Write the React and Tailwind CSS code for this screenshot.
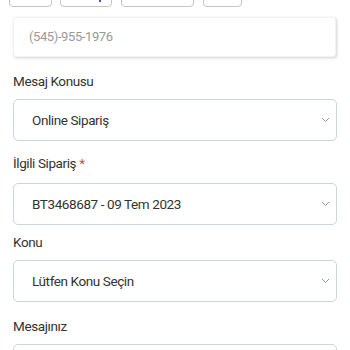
import React from 'react';

function Chevron() {
    return (
        <svg width="9" height="6" viewBox="0 0 9 6" fill="none" className="shrink-0">
            <path d="M1 1l3.5 3.5L8 1" stroke="#8a96a3" strokeWidth="1" />
        </svg>
    );
}

function SelectBox({ value }) {
    return (
        <div className="h-[42px] border border-[#c9d5df] rounded-[5px] flex items-center justify-between pl-[18px] pr-[6px] bg-white">
            <span className="text-[13.5px] tracking-[-0.4px] text-[#333]">{value}</span>
            <Chevron />
        </div>
    );
}

export default function App() {
    return (
        <div className="w-[350px] h-[350px] bg-white overflow-hidden" style={{ fontFamily: 'Roboto, "Liberation Sans", sans-serif' }}>
            <div className="flex h-[18px] -mt-[11px] pl-[9px] gap-[8px]">
                <div className="w-[43px] h-[18px] border border-[#c4c4c4] rounded-[4px]"></div>
                <div className="w-[52px] h-[18px] border border-[#c4c4c4] rounded-[4px] relative">
                    <span className="absolute left-[38px] top-[9px] w-[2px] h-[3px] bg-[#4b4bd1]"></span>
                </div>
                <div className="w-[73px] h-[18px] border border-[#c4c4c4] rounded-[4px] ml-[1px]"></div>
                <div className="w-[39px] h-[18px] border border-[#c4c4c4] rounded-[4px] ml-[1px]"></div>
            </div>
            <div className="px-[13px] pt-[10px]">
                <div className="h-[40px] w-[323px] bg-white rounded-[3px] flex items-center pl-[15px] shadow-[1px_1px_3px_rgba(0,0,0,0.18)] border border-[#f2f2f2]">
                    <span className="text-[13px] tracking-[-0.4px] text-[#9a9a9a]">(545)-955-1976</span>
                </div>

                <div className="mt-[15px] text-[13.5px] tracking-[-0.4px] text-[#333] leading-[18px]">Mesaj Konusu</div>
                <div className="mt-[9px]">
                    <SelectBox value="Online Sipariş" />
                </div>

                <div className="mt-[13px] text-[13.5px] tracking-[-0.4px] text-[#333] leading-[18px]">
                    İlgili Sipariş <span className="text-[#e0434b]">*</span>
                </div>
                <div className="mt-[11px]">
                    <SelectBox value="BT3468687 - 09 Tem 2023" />
                </div>

                <div className="mt-[8px] text-[13.5px] tracking-[-0.4px] text-[#333] leading-[18px]">Konu</div>
                <div className="mt-[9px]">
                    <SelectBox value="Lütfen Konu Seçin" />
                </div>

                <div className="mt-[15px] text-[13.5px] tracking-[-0.4px] text-[#333] leading-[18px]">Mesajınız</div>
                <div className="mt-[9px] h-[40px] border border-[#c9d5df] rounded-[5px]"></div>
            </div>
        </div>
    );
}
